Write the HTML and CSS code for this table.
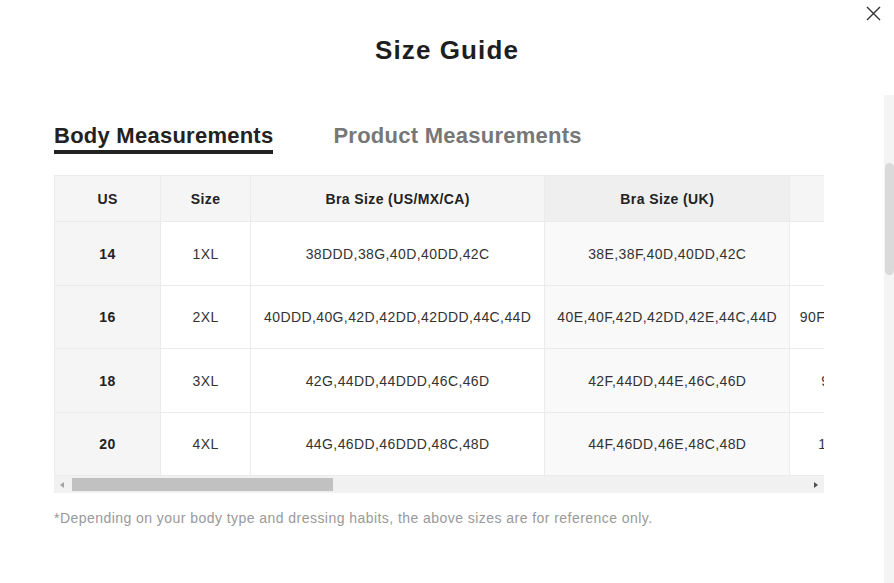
FILE: index.html
```html
<!DOCTYPE html>
<html lang="en">
<head>
<meta charset="utf-8">
<title>Size Guide</title>
<link rel="stylesheet" href="styles.css">
</head>
<body>
<div class="modal">
  <button class="close" aria-label="Close">
    <svg width="15" height="15" viewBox="0 0 15 15"><path d="M1 1L14 14M14 1L1 14" stroke="#333" stroke-width="1.4" fill="none"/></svg>
  </button>
  <h1 class="title">Size Guide</h1>
  <div class="main">
    <div class="content">
      <div class="tabs">
        <div class="tab active">Body Measurements</div>
        <div class="tab">Product Measurements</div>
      </div>
      <div class="table-wrap">
        <table class="size-table">
          <colgroup>
            <col class="c-us"><col class="c-size"><col class="c-usbra"><col class="c-ukbra"><col class="c-eubra"><col class="c-more"><col class="c-more"><col class="c-more"><col class="c-more"><col class="c-more">
          </colgroup>
          <thead>
            <tr>
              <th class="first">US</th>
              <th>Size</th>
              <th>Bra Size (US/MX/CA)</th>
              <th class="hl">Bra Size (UK)</th>
              <th>Bra Size (EU)</th>
              <th>Bra Size (FR/ES)</th>
              <th>Bra Size (AU)</th>
              <th>Bust</th>
              <th>Waist</th>
              <th>Hip</th>
            </tr>
          </thead>
          <tbody>
            <tr class="r-odd">
              <td class="first">14</td><td>1XL</td><td>38DDD,38G,40D,40DD,42C</td><td class="hl">38E,38F,40D,40DD,42C</td><td>85F,85G,90D,90E,95C</td><td>100F,100G,105D,105E,110C</td><td>16E,16F,18D,18DD,20C</td><td>108-113</td><td>89-94</td><td>114-119</td>
            </tr>
            <tr class="r-even">
              <td class="first">16</td><td>2XL</td><td>40DDD,40G,42D,42DD,42DDD,44C,44D</td><td class="hl">40E,40F,42D,42DD,42E,44C,44D</td><td>90F,90G,95D,95E,95F,100C,100D</td><td>105F,105G,110D,110E,110F,115C,115D</td><td>18E,18F,20D,20DD,20E,22C,22D</td><td>113-118</td><td>94-99</td><td>119-124</td>
            </tr>
            <tr class="r-odd">
              <td class="first">18</td><td>3XL</td><td>42G,44DD,44DDD,46C,46D</td><td class="hl">42F,44DD,44E,46C,46D</td><td>95G,100E,100F,105C,105D</td><td>110G,115E,115F,120C,120D</td><td>20F,22DD,22E,24C,24D</td><td>118-123</td><td>99-104</td><td>124-129</td>
            </tr>
            <tr class="r-even">
              <td class="first">20</td><td>4XL</td><td>44G,46DD,46DDD,48C,48D</td><td class="hl">44F,46DD,46E,48C,48D</td><td>100G,105E,105F,110C,110D</td><td>115G,120E,120F,125C,125D</td><td>22F,24DD,24E,26C,26D</td><td>123-128</td><td>104-109</td><td>129-134</td>
            </tr>
          </tbody>
        </table>
      </div>
      <div class="hscroll">
        <span class="arrow left"></span>
        <div class="hthumb"></div>
        <span class="arrow right"></span>
      </div>
      <p class="note">*Depending on your body type and dressing habits, the above sizes are for reference only.</p>
    </div>
    <div class="vscroll"><div class="vthumb"></div></div>
  </div>
</div>
</body>
</html>
```
FILE: styles.css
```css
html, body {
  margin: 0;
  padding: 0;
  background: #fff;
}
body {
  font-family: "Liberation Sans", Arial, sans-serif;
  color: #333;
  width: 894px;
  height: 583px;
  overflow: hidden;
}
.modal {
  position: relative;
  display: flex;
  flex-direction: column;
  height: 583px;
}
.close {
  position: absolute;
  top: 5px;
  right: 12px;
  width: 17px;
  height: 17px;
  padding: 1px;
  border: 0;
  background: none;
  display: flex;
  align-items: center;
  justify-content: center;
  cursor: pointer;
}
.title {
  margin: 0;
  padding-top: 35px;
  height: 30px;
  line-height: 30px;
  font-size: 26px;
  font-weight: bold;
  letter-spacing: 1.1px;
  text-align: center;
  color: #1e1e1e;
  margin-bottom: 30px;
}
.main {
  flex: 1;
  display: flex;
  min-height: 0;
}
.content {
  flex: 1;
  min-width: 0;
  padding: 28px 60px 0 54px;
}
.tabs {
  display: flex;
  gap: 60px;
}
.tab {
  font-size: 22px;
  line-height: 26px;
  font-weight: bold;
  letter-spacing: 0.25px;
  color: #777;
  padding-bottom: 1px;
  border-bottom: 4px solid transparent;
}
.tab.active {
  color: #222;
  border-bottom-color: #222;
}
.table-wrap {
  margin-top: 21px;
  width: 770px;
  overflow: hidden;
}
.size-table {
  table-layout: fixed;
  border-collapse: separate;
  border-spacing: 0;
  width: 2166px;
  border-top: 1px solid #ebebeb;
  border-left: 1px solid #ebebeb;
  font-size: 14px;
  letter-spacing: 0.4px;
}
.c-us { width: 106px; }
.c-size { width: 90px; }
.c-usbra { width: 294px; }
.c-ukbra { width: 245px; }
.c-eubra { width: 244px; }
.c-more { width: 237px; }
.size-table th,
.size-table td {
  text-align: center;
  white-space: nowrap;
  padding: 0 8px;
  border-right: 1px solid #ebebeb;
  border-bottom: 1px solid #ebebeb;
  box-sizing: border-box;
}
.size-table th {
  height: 46px;
  background: #f5f5f5;
  color: #222;
  font-weight: bold;
}
.size-table th.hl {
  background: #efefef;
}
.size-table td {
  color: #333;
  background: #fff;
}
.size-table .r-odd td { height: 64px; }
.size-table .r-even td { height: 63px; }
.size-table td.first {
  background: #f5f5f5;
  font-weight: bold;
  color: #222;
}
.size-table td.hl {
  background: #f9f9f9;
}
.hscroll {
  width: 770px;
  height: 17px;
  background: #f1f1f1;
  display: flex;
  align-items: center;
  gap: 2px;
}
.arrow {
  width: 16px;
  height: 17px;
  display: flex;
  align-items: center;
  justify-content: center;
  flex: none;
}
.arrow::before {
  content: "";
  width: 0;
  height: 0;
  border-top: 3.5px solid transparent;
  border-bottom: 3.5px solid transparent;
}
.arrow.left::before {
  border-right: 4px solid #a3a3a3;
}
.arrow.right {
  margin-left: auto;
}
.arrow.right::before {
  border-left: 4px solid #505050;
}
.hthumb {
  width: 261px;
  height: 13px;
  background: #c1c1c1;
}
.note {
  margin: 16px 0 0;
  font-size: 14px;
  line-height: 18px;
  letter-spacing: 0.45px;
  color: #999;
}
.vscroll {
  width: 10px;
  flex: none;
  background: #f4f4f4;
  padding-top: 68px;
  box-sizing: border-box;
}
.vthumb {
  width: 9px;
  margin-left: 1px;
  height: 112px;
  border-radius: 5px;
  background: #dadada;
}
```
